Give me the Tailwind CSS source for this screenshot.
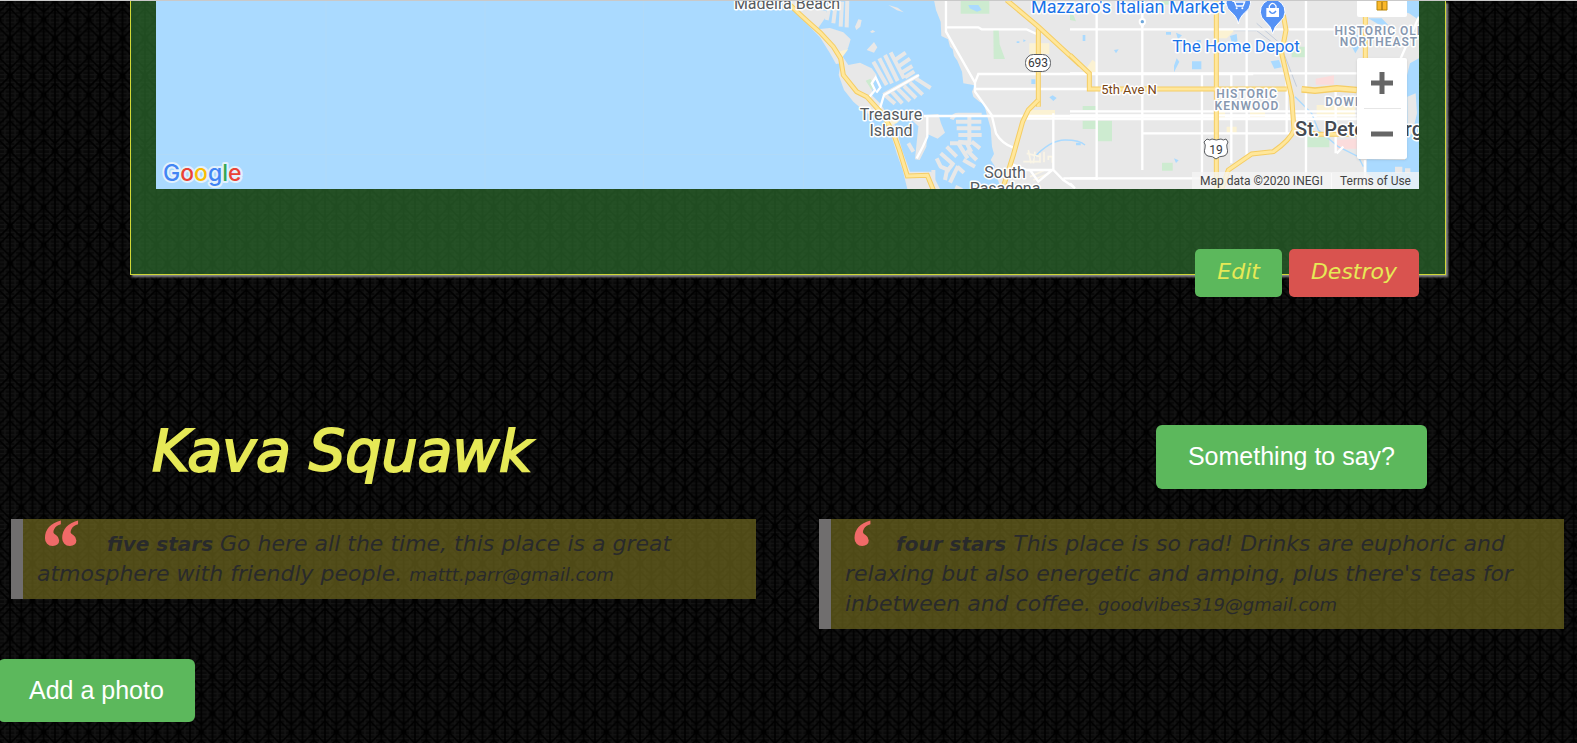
<!DOCTYPE html>
<html lang="en">
<head>
<meta charset="utf-8">
<title>Kava Squawk</title>
<script src="https://cdn.jsdelivr.net/npm/@tailwindcss/browser@4"></script>
</head>
<body class="relative min-h-screen overflow-x-hidden bg-black font-['DejaVu_Sans',sans-serif]">
<svg class="absolute inset-0 h-full w-full" aria-hidden="true">
  <defs>
    <pattern id="weave" width="18" height="30" patternUnits="userSpaceOnUse" patternTransform="translate(10 1) scale(1.25)">
      <rect width="18" height="30" fill="#090909"/>
      <path d="M0 2h18M0 5h18M0 8h18M0 11h18M0 14h18M0 17h18M0 20h18M0 23h18M0 26h18M0 29h18M4 0v30M14 0v30" stroke="#141414" stroke-width="1"/>
      <path d="M0 0L9 9L18 0M0 30L9 21L18 30M0 6L9 15L18 6M0 24L9 15L18 24M0 0v30M9 0v30M18 0v30" stroke="#000" stroke-width="1.3" fill="none"/>
      <circle cx="9" cy="15" r="2.2"/><circle cx="0" cy="0" r="2.2"/><circle cx="18" cy="0" r="2.2"/><circle cx="0" cy="30" r="2.2"/><circle cx="18" cy="30" r="2.2"/>
    </pattern>
  </defs>
  <rect width="100%" height="100%" fill="url(#weave)"/>
</svg>

<main class="relative border-t border-[#c9c9c9]">
  <section class="mr-[131px] ml-[130px] border border-t-0 border-[#d0d636] bg-[#2d6c2f]/70 pr-[26px] pl-[25px] shadow-[2px_2px_2px_#8a8a8a]">
    <div class="relative h-[188px] overflow-hidden bg-[#aadaff]">
      <svg class="h-full w-full" viewBox="156 1 1263 188" preserveAspectRatio="xMidYMid slice" role="img" aria-label="Map of St. Petersburg" font-family="Roboto, sans-serif">
        <rect x="156" y="1" width="1263" height="188" fill="#aadaff"/>
        <path d="M156 154.500h760M326 0v189M485 0v189M643.500 0v189M803.500 0v189" stroke="#b0daf9"/>
        <g transform="translate(720 0) scale(.33333)">
          <path fill="#e8e8e8" d="M642 0L648 30L662 65L664 108L684 118L690 140L698 148L702 168L712 182L726 215L730 250L764 256L756 275L760 290L778 305L792 312L802 350L812 385L816 440L822 462L812 480L824 498L830 530L845 570H2100V0Z"/>
          <path fill="#e8e8e8" d="M195 0L240 50L300 112L330 160L348 192L362 190L356 225L372 270L400 305L440 340L490 350L512 400L530 460L548 510L562 567H660L634 515L570 515L548 455L520 360L500 340L480 310L455 285L460 250L470 225L455 205L420 188L385 195L365 165L384 145L392 118L370 97L330 84L292 88L318 50L318 32L270 26L235 0Z"/>
          <path fill="#e8e8e8" d="M405 80l10-22 10 2-4 20-12 10zM450 95l8-5 8 5-10 4zM440 150l22-24 10 16-10 16zM505 15l28 8 18 14-20-6zM555 350l100-8 8 28 12 28-22 18-36-16-44-42zM595 380l28 0-4 60-20 40-14-2 4-40z"/>
          <g stroke="#e8e8e8" stroke-width="12" fill="none" stroke-linejoin="round">
            <path d="M330 10l-10 50M348 5l-8 65M366 5l-4 75M382 0l-2 82"/>
            <path d="M460 185l40 70M478 175l38 75M495 165l38 78M512 157l40 78"/>
            <path d="M525 180l32-22M535 200l35-24M545 218l32-20M555 232l28-18"/>
            <path d="M495 285l30 26M515 275l32 35M532 265l38 38M552 258l36 36M570 248l38 36M588 236l44 28M490 285l104-58"/>
            <path d="M695 358q5-14 20-14h70M708 365h76M710 385h72M715 405h70M748 340v95M715 427h30M755 425l25 20"/>
            <path d="M650 475l12 25 28 12M662 460l40 35M680 440l30 30M690 430h25l28 45M715 425l25 5 14 26M675 540l5-25 20-25M690 548l24-50M740 450l30 30M730 480l35 20M712 500l20 18"/>
            <path d="M565 430l15 25M640 510v30M706 560l20 10"/>
          </g>
          <g fill="#cdebd0"><path d="M722 0h86v41h-86zM820 88h16l3 45 16 44h-34zM437 242l14-6 12 20-8 14z"/></g>
          <g fill="#fbf2d3"><path d="M928 130h60v32h-60zM355 155l30-8-22 30zM510 345l30 15-10 10-18 5zM915 330h90v26h-90z"/></g>
          <g fill="#aadaff"><path d="M745 15l30 0 10 15-14 5-22-10zM934 238h12v14h-12zM988 292l10-6 12 8-10 9zM890 124h8v5h-8zM910 118l8 4-8 4z"/></g>
          <path d="M940 475q50-55 95-55t60 15" stroke="#aadaff" stroke-width="4" fill="none"/>
          <g stroke="#faf5e6" stroke-width="5" fill="none"><path d="M925 450l8 40M910 485h50M945 455l-5 35M960 460v28M972 455v32M985 480v-10h12v18M920 460l40 10M930 530l45-20M940 540l50-22"/></g>
          <g stroke="#fff" stroke-width="7" fill="none">
            <path d="M678 0V95L765 248V275L815 345L828 400Q845 430 880 443M678 82H775L785 88H920L950 102M765 248L775 222H1600M768 267H1120M612 348H1850M915 356H2000M622 350V410Q610 440 590 475M480 325l12-40 105-60M445 295l20-25 -10-20 12-18 14 30-12 16M1000 340V510M870 490L895 500L920 510H1000L1030 540L1060 560M1030 535H1130M930 510l25 35 45-38"/>
          </g>
          <path d="M955 85V320" stroke="#f5cd64" stroke-width="15"/><path d="M955 85V320" stroke="#ffe79b" stroke-width="9"/>
          <path d="M195 0Q240 45 300 97L340 140L362 175L370 225L410 275L440 290L490 345L520 400L538 450L562 528L622 526L640 570M860 0L955 80L1080 195M955 300L925 330L908 365L880 465L850 560" stroke="#f5cd64" stroke-width="15" fill="none"/>
          <path d="M195 0Q240 45 300 97L340 140L362 175L370 225L410 275L440 290L490 345L520 400L538 450L562 528L622 526L640 570M860 0L955 80L1080 195M955 300L925 330L908 365L880 465L850 560" stroke="#ffe79b" stroke-width="9" fill="none"/>
        </g>
        <g transform="translate(1070 0) scale(.33333)">
          <g fill="#cdebd0"><path d="M0 42l10 2 8 20-18-4zM38 362h40v25H38zM84 362h42v62H84zM38 318h40v12H38zM276 488h32v24h-32zM712 410h66v32h-66zM665 140h40v32h-40zM270 0h42v14h-42z"/></g>
          <g fill="#fbdcdc"><path d="M737 236l55-10v28h-55zM800 420l60-4v30h-60z"/></g>
          <g fill="#fbf2d3"><path d="M42 215l25-36 10 8v30zM440 90h55l-25 25h-30zM445 330h20v22h-20zM470 380h30v20h-30zM540 325h45v25h-45zM740 315h115v35H740z"/></g>
          <g fill="#aadaff"><path d="M366 184h28v24h-28zM38 105h8v18h-8zM288 96h15v8h-15zM318 98l18 8-12 12zM380 120h12v10h-12zM132 150l14-2-8 12zM320 175l8 10-16 32 0-20zM480 108l20-6 4 36-14 6zM602 184l25-4 8 22-22 4zM840 130l22-26 16 20-22 36zM312 475l14 6-8 8zM18 428h14v8H18z"/><path d="M1047 175L1020 190L1005 250V480L890 478V520L960 567H1047Z"/><path d="M895 55l40 0 20 20-30-2zM960 0h87v60l-30-20-40-10z"/></g>
          <path fill="#e8e8e8" d="M1012 290l25-10 4 60-14 60-14 10zM975 500h22v20h-22zM1005 505h16v15h-16z"/>
          <path d="M675 290l50 50 20 50 60 50 60 30 15 30" stroke="#aadaff" stroke-width="4" fill="none"/>
          <path d="M560 70l70 60 50 130M490 92h70l80 60" stroke="#c3cddb" stroke-width="3" fill="none"/>
          <g stroke="#fff" stroke-width="7" fill="none">
            <path d="M80 0V540M217 0V510M396 225V540M484 222V490M530 0V480M650 220V400M708 0V540M797 270V460M0 88H860M0 220H860M0 334H860M0 346H860M0 357H860M220 400H740M0 535H440M1047 50L990 180M0 550l15 15M820 440l-20 20M885 480V567"/>
          </g>
          <g fill="none" stroke="#f5cd64" stroke-width="15">
            <path d="M0 165L58 220V267H650M439 0V567M640 45L648 90L635 160L665 290L672 390Q660 420 610 455L545 462L475 510L455 567M886 0V175M672 385L740 403H860"/><path stroke-width="20" d="M695 268L735 272L800 265L860 270"/>
          </g>
          <g fill="none" stroke="#ffe79b" stroke-width="9">
            <path d="M0 165L58 220V267H650M439 0V567M640 45L648 90L635 160L665 290L672 390Q660 420 610 455L545 462L475 510L455 567M886 0V175M672 385L740 403H860"/><path stroke-width="12" d="M695 268L735 272L800 265L860 270"/>
          </g>
          <g fill="#5491f5" stroke="#fff" stroke-width="3">
            <path d="M505 72q-4-22-22-36a37 37 0 1 1 44 0q-18 14-22 36z"/>
            <path d="M608 101q-4-22-24-38a37 37 0 1 1 48 0q-20 16-24 38z"/>
          </g>
          <path d="M487 4h6l6 14h20l5-12h-28" stroke="#fff" stroke-width="4" fill="none"/><circle cx="500" cy="25" r="3" fill="#fff"/><circle cx="517" cy="25" r="3" fill="#fff"/>
          <path d="M589 24h38v27h-38z" fill="#fff"/><path d="M598 24v-6q10-16 20 0v6" stroke="#fff" stroke-width="4" fill="none"/><path d="M598 33q10 14 20 0" stroke="#5491f5" stroke-width="4" fill="none"/>
          <circle cx="217" cy="65" r="11" fill="#fff"/><path d="M210 72l7 16 7-16z" fill="#fff"/><circle cx="217" cy="65" r="5" fill="#6da7dc"/>
        </g>
        <g fill="#fff" stroke="#5a5d61">
          <rect x="1025.500" y="54.500" width="25" height="17" rx="8"/>
          <path d="M1207 139q3 2 5 0q4 2 9 0q2 2 5 0l2 3q-2 3-1 6q2 6-3 8q-5 0-8 3q-3-3-8-3q-5-2-3-8q1-3-1-6z"/>
        </g>
        <g font-size="12" fill="#36393d" text-anchor="middle"><text x="1038" y="67">693</text><text x="1216" y="154">19</text></g>
        <g paint-order="stroke" stroke="#fff" stroke-width="3" stroke-linejoin="round" text-anchor="middle">
          <g font-size="16" fill="#565b61"><text x="787" y="9">Madeira Beach</text><text x="891" y="120">Treasure</text><text x="891" y="136">Island</text><text x="1005" y="178">South</text><text x="1005" y="194">Pasadena</text></g>
          <g font-size="17" fill="#1a73e8"><text x="1128" y="13" font-size="18">Mazzaro's Italian Market</text><text x="1236" y="52">The Home Depot</text></g>
          <text x="1129" y="94" font-size="13" fill="#7a4512">5th Ave N</text>
          <g font-size="12" font-weight="600" fill="#8798b0" letter-spacing="1"><text x="1247" y="98">HISTORIC</text><text x="1247" y="110">KENWOOD</text><text x="1380" y="35">HISTORIC OLD</text><text x="1379" y="46">NORTHEAST</text><text x="1364" y="106">DOWNTOWN</text></g>
          <text x="1359" y="136" font-size="20" font-weight="500" fill="#444a52">St. Petersburg</text>
        </g>
        <text x="163" y="181" font-family="Inter, sans-serif" font-size="23" font-weight="500" paint-order="stroke" stroke="#e2f1fc" stroke-width="4" stroke-linejoin="round"><tspan fill="#4285f4">G</tspan><tspan fill="#ea4335">o</tspan><tspan fill="#fbbc05">o</tspan><tspan fill="#4285f4">g</tspan><tspan fill="#34a853">l</tspan><tspan fill="#ea4335">e</tspan></text>
      </svg>
      <div class="absolute right-3 -top-8 flex h-12 w-[50px] justify-center rounded-xs bg-white">
        <svg class="mt-8 h-3 w-4" viewBox="0 0 16 12" aria-hidden="true"><path d="M3 0h10v9H3z" fill="#fbb829" stroke="#b8860b"/><path d="M8 1v8" stroke="#8a6410"/></svg>
      </div>
      <div class="absolute top-[57px] right-3 flex h-[101px] w-[50px] flex-col items-center rounded-xs bg-white shadow">
        <button class="flex w-full flex-1 items-center justify-center" aria-label="Zoom in"><svg class="h-[22px] w-[22px]" viewBox="0 0 22 22"><path d="M11 0v22M0 11h22" stroke="#666" stroke-width="5"/></svg></button>
        <div class="h-px w-[37px] bg-[#e6e6e6]"></div>
        <button class="flex w-full flex-1 items-center justify-center" aria-label="Zoom out"><svg class="h-[22px] w-[22px]" viewBox="0 0 22 22"><path d="M0 11h22" stroke="#666" stroke-width="5"/></svg></button>
      </div>
      <div class="absolute right-0 bottom-0 flex h-[17px] items-center bg-[#f5f5f5]/75 font-['Roboto',sans-serif] text-xs text-[#444]">
        <span class="px-2">Map data ©2020 INEGI</span>
        <a href="#" class="border-l border-white/60 px-2">Terms of Use</a>
      </div>
    </div>
    <div class="mt-[60px] -mb-[23px] flex justify-end gap-[7px] text-[22px] text-[#e6e956] italic">
      <button class="h-12 rounded-[5px] bg-[#5cb85c] px-[22px] pb-1">Edit</button>
      <button class="h-12 rounded-[5px] bg-[#d9534f] px-[22px] pb-1">Destroy</button>
    </div>
  </section>

  <header class="mt-[150px] mr-[150px] ml-[152px] flex h-16 items-center justify-between">
    <h1 class="pb-3 text-[57px] leading-16 text-[#e6e956] italic [-webkit-text-stroke:2px_#e6e956]">Kava Squawk</h1>
    <button class="h-16 rounded-md bg-[#5cb85c] px-8 font-['Liberation_Sans',Arial,sans-serif] text-[25px] text-white">Something to say?</button>
  </header>

  <div class="mt-[30px] flex items-start gap-[63px] pr-[13px] pl-[11px] text-[22px] leading-[30px] text-[#292a2b] italic">
    <blockquote class="flex-1 border-l-12 border-[#706e6e] bg-[#6f6820]/70 py-[10px] pr-4 pl-[14px]">
      <span class="inline-block h-[30px] w-[70px] overflow-visible align-top font-['Liberation_Serif',serif] text-[84px] leading-[40px] font-bold text-[#f06a68]">“</span><b class="text-[20px] leading-5">five stars</b> Go here all the time, this place is a great atmosphere with friendly people. <small class="text-[18px] leading-5">mattt.parr@gmail.com</small>
    </blockquote>
    <blockquote class="flex-1 border-l-12 border-[#706e6e] bg-[#6f6820]/70 py-[10px] pr-4 pl-[14px]">
      <span class="inline-block h-[30px] w-[51px] overflow-visible align-top font-['Liberation_Serif',serif] text-[84px] leading-[40px] font-bold text-[#f06a68]">‘</span><b class="text-[20px] leading-5">four stars</b> This place is so rad! Drinks are euphoric and relaxing but also energetic and amping, plus there's teas for inbetween and coffee. <small class="text-[18px] leading-5">goodvibes319@gmail.com</small>
    </blockquote>
  </div>

  <button class="mt-[30px] mb-5 -ml-[2px] h-[63px] rounded-md bg-[#5cb85c] px-[31px] font-['Liberation_Sans',Arial,sans-serif] text-[25px] text-white">Add a photo</button>
</main>
</body>
</html>
